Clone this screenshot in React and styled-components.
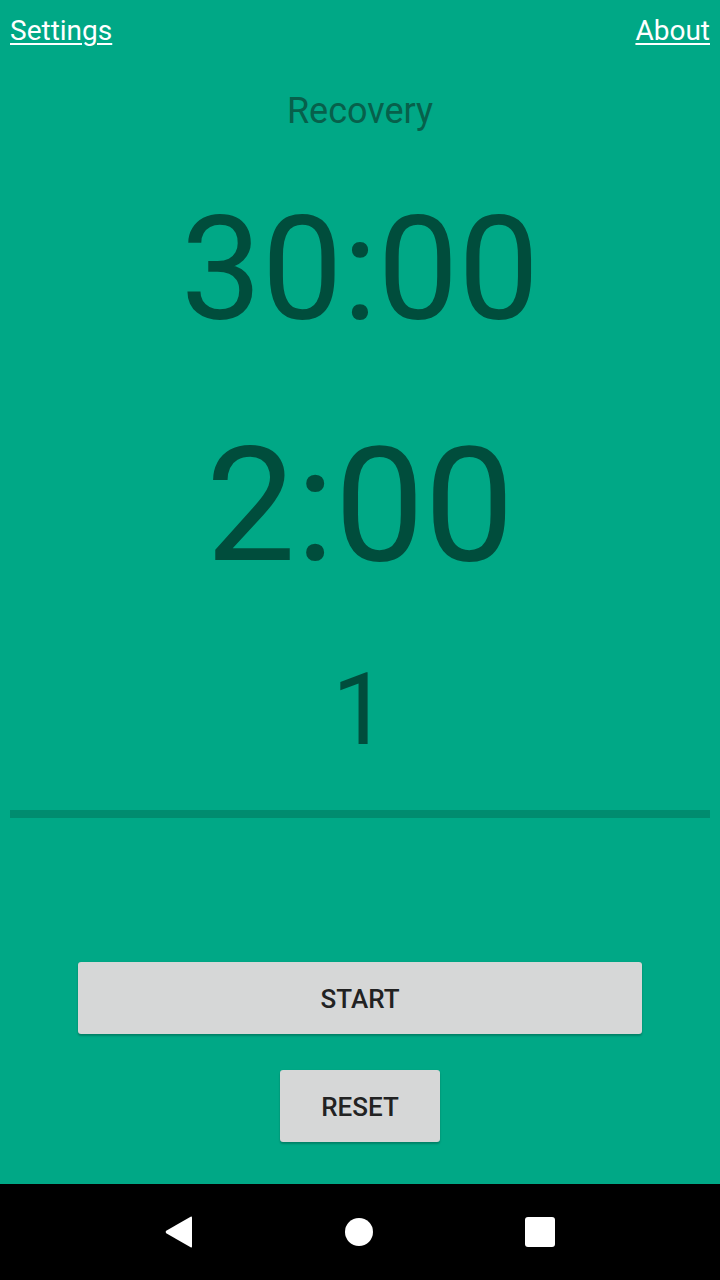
import React from 'react';
import styled, { createGlobalStyle } from 'styled-components';

const GlobalStyle = createGlobalStyle`
  html, body {
    margin: 0;
    padding: 0;
    background: #00a886;
  }
  body {
    font-family: Roboto, "Liberation Sans", sans-serif;
  }
`;

const Screen = styled.div`
  width: 720px;
  height: 1280px;
  display: flex;
  flex-direction: column;
  background: #00a886;
`;

const Main = styled.div`
  flex: 1;
  display: flex;
  flex-direction: column;
  align-items: center;
  padding: 17px 10px 42px;
`;

const TopBar = styled.div`
  align-self: stretch;
  display: flex;
  justify-content: space-between;
`;

const Link = styled.a`
  font-size: 28px;
  line-height: 1;
  color: #ffffff;
  text-decoration: underline;
  text-decoration-thickness: 2px;
  text-underline-offset: 3px;
`;

const Label = styled.div`
  margin-top: 48px;
  font-size: 36px;
  line-height: 1;
  color: #07604b;
`;

const Readout = styled.div`
  margin-top: ${(p) => p.$gap}px;
  font-size: ${(p) => p.$size}px;
  line-height: 1;
  color: #004d3c;
`;

const Divider = styled.div`
  align-self: stretch;
  height: 8px;
  margin-top: 50px;
  background: #008c6f;
`;

const Buttons = styled.div`
  margin-top: auto;
  display: flex;
  flex-direction: column;
  align-items: center;
  gap: 36px;
`;

const Button = styled.button`
  width: ${(p) => p.$width}px;
  height: 72px;
  border: none;
  border-radius: 3px;
  background: #d6d7d7;
  box-shadow: 0 2px 2px rgba(0, 0, 0, 0.22), 0 0 1px rgba(0, 0, 0, 0.12);
  font-family: Roboto, "Liberation Sans", sans-serif;
  font-weight: 500;
  font-size: 26px;
  color: #222222;
  padding: 2px 0 0;
`;

const NavBar = styled.div`
  height: 96px;
  background: #000;
  display: flex;
  align-items: center;
  justify-content: center;
  gap: 152px;
`;

const Back = () => (
  <svg width="28" height="32" viewBox="0 0 28 32">
    <path d="M27 1.5 L27 30.5 Q27 32 25.6 31.2 L1.2 17.2 Q0 16 1.2 14.8 L25.6 0.8 Q27 0 27 1.5 Z" fill="#fff" />
  </svg>
);

const Home = styled.div`
  width: 28px;
  height: 28px;
  border-radius: 50%;
  background: #fff;
`;

const Recents = styled.div`
  width: 30px;
  height: 30px;
  border-radius: 3px;
  background: #fff;
`;

export default function App() {
  return (
    <Screen>
      <GlobalStyle />
      <Main>
        <TopBar>
          <Link>Settings</Link>
          <Link>About</Link>
        </TopBar>
        <Label>Recovery</Label>
        <Readout $size={144} $gap={69}>30:00</Readout>
        <Readout $size={160} $gap={84}>2:00</Readout>
        <Readout $size={100} $gap={74}>1</Readout>
        <Divider />
        <Buttons>
          <Button $width={564}>START</Button>
          <Button $width={160}>RESET</Button>
        </Buttons>
      </Main>
      <NavBar>
        <Back />
        <Home />
        <Recents />
      </NavBar>
    </Screen>
  );
}
